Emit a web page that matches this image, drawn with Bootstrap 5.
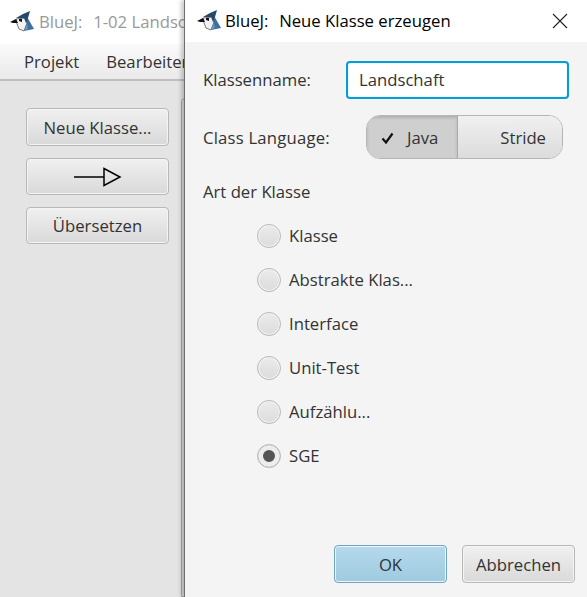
<!DOCTYPE html>
<html lang="de"><head><meta charset="utf-8"><title>BlueJ</title>
<link rel="stylesheet" href="https://cdn.jsdelivr.net/npm/bootstrap@5.3.0/dist/css/bootstrap.min.css">
<style>
html,body{margin:0;height:597px;overflow:hidden}
body{width:587px;position:relative;background:#e4e4e4;font-family:"Open Sans","Noto Sans",sans-serif;font-size:16.7px;color:#333}
.win-back{width:187px;height:597px;overflow:hidden;position:relative}
.tbar{height:44px;background:#fff;white-space:nowrap;padding-left:10px;gap:3px}
.tbar svg{flex:none}
.tbar-text{color:#999}
.sub{margin-left:2px}
.menubar{height:37px;background:linear-gradient(#fbfbfb,#e9e9e9);border-bottom:2px solid #bfbfbf;padding-left:24px;gap:27px;white-space:nowrap;color:#333}
.tools{padding:27px 0 0 26px;gap:12px;width:143px;box-sizing:content-box}
.fx-btn{background:linear-gradient(#f0f0f0,#d9d9d9);border:1px solid #b8b8b8;border-radius:4px;color:#333;font-size:16.7px;padding:1px 0 0;display:flex;align-items:center;justify-content:center;box-shadow:inset 0 0 0 1px #f4f4f4}
.tool-btn{width:143px;height:38px}
.tool-arrow{height:37px}
.tool-last{height:37px}
.tab-edge{position:absolute;left:181px;top:98px;width:10px;height:499px;border:1px solid #a8a8a8;border-radius:4px 0 0 0;background:#ddd}
.dlg{position:absolute;left:184px;top:0;width:403px;height:597px;background:#f4f4f4;border-left:1px solid #6e6e6e;box-shadow:-3px 0 4px rgba(0,0,0,.2)}
.dlg-title{height:42px;background:#fff;padding:0 19px 0 12px;color:#000}
.dlg-name{margin-left:2px}
.dlg-body{padding:0 0 0 18px;height:555px}
.row-name{height:38px;margin-top:19px}
.lbl{width:143px}
.fld{width:223px;height:38px;border:2px solid #039ed3;border-radius:4px;background:#fff;padding:0 11px;display:flex;align-items:center;box-shadow:inset 0 0 2px #cfeaf5;color:#333}
.row-lang{height:44px;margin-top:16px}
.lbl-lang{width:163px;padding-top:2px;letter-spacing:.2px}
.seg{width:197px;height:44px;border:1px solid #b5b5b5;border-radius:14px;overflow:hidden}
.seg-on{width:91px;background:#cfcfcf;box-shadow:inset 0 2px 3px #b0b0b0;border-right:1px solid #aaa;gap:13px;padding:2px 0 0 14px}
.seg-off{flex:1;background:linear-gradient(#f0f0f0,#dcdcdc);justify-content:flex-end;padding:2px 16px 0 0}
.art{margin-top:22px;line-height:22px}
.radios{margin:11px 0 0 54px}
.rad{height:44px;gap:8px}
.dot{width:24px;height:24px;border-radius:50%;border:1px solid #b8b8b8;background:linear-gradient(#ececec,#dbdbdb);box-shadow:inset 0 0 0 1px #f4f4f4}
.dot-on{background:#f2f2f2;box-shadow:inset 0 0 0 5px #ededed,inset 0 0 0 12px #555}
.foot{position:absolute;right:12px;bottom:14px;gap:15px}
.ok-btn{width:113px;height:38px;background:linear-gradient(#b4d9ec,#9fcae0);border-color:#6fa3bf}
.cancel-btn{width:113px;height:38px}
</style></head>
<body>
<svg width="0" height="0" class="d-block"><defs><g id="jay"><path d="M12 7 16 5 24 19 14 21Z" fill="#3a70a3"/><path d="M6 9 15 8 17 13 14 21 9 19 7 14Z" fill="#f2f2f2" stroke="#444" stroke-width=".7"/><path d="M6 8 13 4 20 1 18 8 16 13 14 8Z" fill="#23496d"/><path d="M0 12 6 9 8 13 3 13Z" fill="#111"/><path d="M9 9 12 9 12 12 9 11Z" fill="#111"/><path d="M14 21 17 13 18 19Z" fill="#6d94b8"/></g></defs></svg>
<div class="win-back">
  <div class="tbar d-flex align-items-center">
    <svg width="26" height="24" viewBox="0 0 26 24"><use href="#jay"/></svg>
    <span class="tbar-text">BlueJ:&nbsp; <span class="sub">1-02 Landschaft</span></span>
  </div>
  <div class="menubar d-flex align-items-center"><span>Projekt</span><span>Bearbeiten</span></div>
  <div class="tools d-flex flex-column">
    <button class="fx-btn tool-btn">Neue Klasse...</button>
    <button class="fx-btn tool-arrow" aria-label="Pfeil"><svg width="48" height="22" viewBox="0 0 48 22"><path d="M0 11H30" stroke="#000" stroke-width="1.5"/><path d="M30 2.5 46 11 30 19.500Z" fill="none" stroke="#000" stroke-width="1.500"/></svg></button>
    <button class="fx-btn tool-btn tool-last">Übersetzen</button>
  </div>
  <div class="tab-edge"></div>
</div>
<div class="dlg">
  <div class="dlg-title d-flex align-items-center">
    <svg width="26" height="24" viewBox="0 0 26 24"><use href="#jay"/></svg>
    <span class="dlg-name">BlueJ:&nbsp; <span class="sub">Neue Klasse erzeugen</span></span>
    <svg class="ms-auto" width="16" height="16" viewBox="0 0 16 16"><path d="M1 1 15 15M15 1 1 15" stroke="#222" stroke-width="1.100"/></svg>
  </div>
  <div class="dlg-body">
    <div class="row-name d-flex align-items-center"><span class="lbl">Klassenname:</span><div class="fld">Landschaft</div></div>
    <div class="row-lang d-flex align-items-center"><span class="lbl-lang">Class Language:</span>
      <div class="seg d-flex">
        <div class="seg-on d-flex align-items-center"><svg width="13" height="12" viewBox="0 0 13 12"><path d="M1.500 6.500 5 10.500 11.500 1.500" fill="none" stroke="#111" stroke-width="2.200"/></svg><span>Java</span></div>
        <div class="seg-off d-flex align-items-center">Stride</div>
      </div>
    </div>
    <div class="art">Art der Klasse</div>
    <div class="radios">
      <div class="rad d-flex align-items-center"><span class="dot"></span><span>Klasse</span></div>
      <div class="rad d-flex align-items-center"><span class="dot"></span><span>Abstrakte Klas...</span></div>
      <div class="rad d-flex align-items-center"><span class="dot"></span><span>Interface</span></div>
      <div class="rad d-flex align-items-center"><span class="dot"></span><span>Unit-Test</span></div>
      <div class="rad d-flex align-items-center"><span class="dot"></span><span>Aufzählu...</span></div>
      <div class="rad d-flex align-items-center"><span class="dot dot-on"></span><span>SGE</span></div>
    </div>
  </div>
  <div class="foot d-flex">
    <button class="fx-btn ok-btn">OK</button>
    <button class="fx-btn cancel-btn">Abbrechen</button>
  </div>
</div>
</body></html>
